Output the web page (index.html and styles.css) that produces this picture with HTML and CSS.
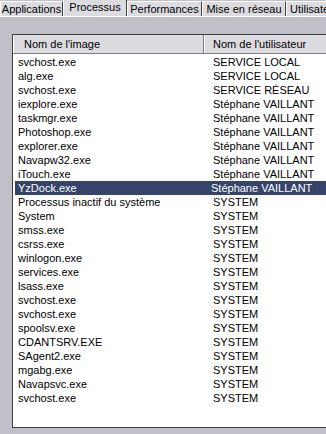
FILE: index.html
```html
<!DOCTYPE html>
<html lang="fr">
<head>
    <meta charset="UTF-8">
    <title>Gestionnaire des tâches</title>
    <link rel="stylesheet" href="styles.css">
</head>
<body>
    <div class="tabs">
        <div class="tab t-apps">Applications</div>
        <div class="tab t-proc active">Processus</div>
        <div class="tab t-perf">Performances</div>
        <div class="tab t-net">Mise en réseau</div>
        <div class="tab t-users">Utilisateurs</div>
    </div>
    <div class="panel">
        <div class="list">
            <div class="row head">
                <div class="col name">Nom de l'image</div>
                <div class="col user">Nom de l'utilisateur</div>
            </div>
            <div class="row"><div class="col name">svchost.exe</div><div class="col user">SERVICE LOCAL</div></div>
            <div class="row"><div class="col name">alg.exe</div><div class="col user">SERVICE LOCAL</div></div>
            <div class="row"><div class="col name">svchost.exe</div><div class="col user">SERVICE RÉSEAU</div></div>
            <div class="row"><div class="col name">iexplore.exe</div><div class="col user">Stéphane VAILLANT</div></div>
            <div class="row"><div class="col name">taskmgr.exe</div><div class="col user">Stéphane VAILLANT</div></div>
            <div class="row"><div class="col name">Photoshop.exe</div><div class="col user">Stéphane VAILLANT</div></div>
            <div class="row"><div class="col name">explorer.exe</div><div class="col user">Stéphane VAILLANT</div></div>
            <div class="row"><div class="col name">Navapw32.exe</div><div class="col user">Stéphane VAILLANT</div></div>
            <div class="row"><div class="col name">iTouch.exe</div><div class="col user">Stéphane VAILLANT</div></div>
            <div class="row selected"><div class="col name">YzDock.exe</div><div class="col user">Stéphane VAILLANT</div></div>
            <div class="row"><div class="col name">Processus inactif du système</div><div class="col user">SYSTEM</div></div>
            <div class="row"><div class="col name">System</div><div class="col user">SYSTEM</div></div>
            <div class="row"><div class="col name">smss.exe</div><div class="col user">SYSTEM</div></div>
            <div class="row"><div class="col name">csrss.exe</div><div class="col user">SYSTEM</div></div>
            <div class="row"><div class="col name">winlogon.exe</div><div class="col user">SYSTEM</div></div>
            <div class="row"><div class="col name">services.exe</div><div class="col user">SYSTEM</div></div>
            <div class="row"><div class="col name">lsass.exe</div><div class="col user">SYSTEM</div></div>
            <div class="row"><div class="col name">svchost.exe</div><div class="col user">SYSTEM</div></div>
            <div class="row"><div class="col name">svchost.exe</div><div class="col user">SYSTEM</div></div>
            <div class="row"><div class="col name">spoolsv.exe</div><div class="col user">SYSTEM</div></div>
            <div class="row"><div class="col name">CDANTSRV.EXE</div><div class="col user">SYSTEM</div></div>
            <div class="row"><div class="col name">SAgent2.exe</div><div class="col user">SYSTEM</div></div>
            <div class="row"><div class="col name">mgabg.exe</div><div class="col user">SYSTEM</div></div>
            <div class="row"><div class="col name">Navapsvc.exe</div><div class="col user">SYSTEM</div></div>
            <div class="row"><div class="col name">svchost.exe</div><div class="col user">SYSTEM</div></div>
        </div>
    </div>
</body>
</html>
```

FILE: styles.css
```css
body {
    margin: 0;
    width: 326px;
    height: 434px;
    overflow: hidden;
    background: #c0c0c8;
    font-family: "Liberation Sans", Arial, sans-serif;
    font-size: 11px;
    color: #000;
}
.tabs {
    display: flex;
    height: 15px;
    padding-top: 1px;
    border-bottom: 1px solid #fff;
    white-space: nowrap;
    overflow: hidden;
}
.tab {
    flex: none;
    box-sizing: border-box;
    background: #dcdce0;
    border-left: 1px solid #fff;
    border-top: 1px solid #fff;
    border-right: 1px solid #404040;
    line-height: 14px;
    text-align: center;
}
.t-apps { width: 63px; }
.t-proc { width: 64px; }
.t-perf { width: 75px; }
.t-net { width: 84px; }
.t-users { width: 60px; text-align: left; padding-left: 3px; }
.tab.active {
    margin-top: -2px;
    margin-bottom: -1px;
    background: #dcdce0;
    line-height: 14px;
}
.panel {
    padding: 17px 0 0 12px;
}
.list {
    width: 340px;
    height: 392px;
    background: #fff;
    border-left: 1px solid #404040;
    border-top: 1px solid #404040;
    border-bottom: 1px solid #404040;
}
.row {
    display: flex;
    height: 14px;
    line-height: 14px;
    white-space: nowrap;
}
.row.head {
    height: 18px;
    line-height: 18px;
    background: #dcdce0;
    border-bottom: 1px solid #808080;
    margin-bottom: 1px;
}
.col.name {
    width: 186px;
    padding-left: 5px;
}
.col.user {
    padding-left: 9px;
}
.head .col {
    border-left: 1px solid #fff;
    border-right: 1px solid #808080;
}
.head .col.name {
    width: 179px;
    padding-left: 10px;
}
.head .col.user {
    flex: 1;
    padding-left: 8px;
}
.row.selected {
    margin-left: 2px;
    margin-right: 2px;
    background: #354468;
    color: #fff;
}
.row.selected .col.name {
    width: 184px;
    padding-left: 3px;
}
```
